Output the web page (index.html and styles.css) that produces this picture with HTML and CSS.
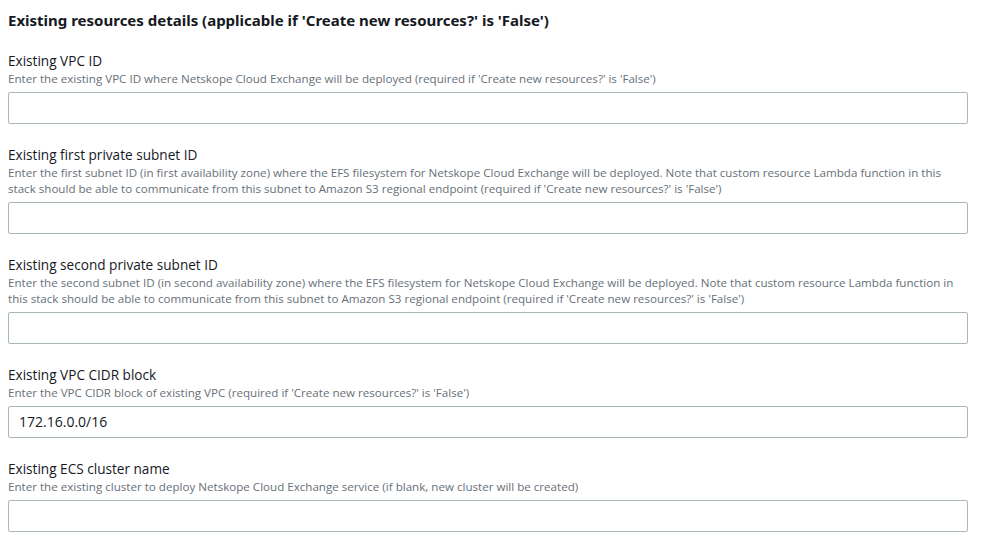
FILE: index.html
```html
<!DOCTYPE html>
<html>
<head>
<meta charset="utf-8">
<link rel="stylesheet" href="styles.css">
</head>
<body>
<div class="page">
  <h2 class="title">Existing resources details (applicable if 'Create new resources?' is 'False')</h2>
  <div class="fields">
    <div class="field">
      <div class="label">Existing VPC ID</div>
      <div class="desc">Enter the existing VPC ID where Netskope Cloud Exchange will be deployed (required if 'Create new resources?' is 'False')</div>
      <div class="input"></div>
    </div>
    <div class="field">
      <div class="label">Existing first private subnet ID</div>
      <div class="desc">Enter the first subnet ID (in first availability zone) where the EFS filesystem for Netskope Cloud Exchange will be deployed. Note that custom resource Lambda function in this stack should be able to communicate from this subnet to Amazon S3 regional endpoint (required if 'Create new resources?' is 'False')</div>
      <div class="input"></div>
    </div>
    <div class="field">
      <div class="label">Existing second private subnet ID</div>
      <div class="desc">Enter the second subnet ID (in second availability zone) where the EFS filesystem for Netskope Cloud Exchange will be deployed. Note that custom resource Lambda function in this stack should be able to communicate from this subnet to Amazon S3 regional endpoint (required if 'Create new resources?' is 'False')</div>
      <div class="input"></div>
    </div>
    <div class="field">
      <div class="label">Existing VPC CIDR block</div>
      <div class="desc">Enter the VPC CIDR block of existing VPC (required if 'Create new resources?' is 'False')</div>
      <div class="input">172.16.0.0/16</div>
    </div>
    <div class="field">
      <div class="label">Existing ECS cluster name</div>
      <div class="desc">Enter the existing cluster to deploy Netskope Cloud Exchange service (if blank, new cluster will be created)</div>
      <div class="input"></div>
    </div>
  </div>
</div>
</body>
</html>
```

FILE: styles.css
```css
html, body {
  margin: 0;
  padding: 0;
  background: #ffffff;
}
body {
  font-family: "Open Sans", "Noto Sans", sans-serif;
  color: #16191f;
}
.page {
  padding: 9px 13px 0 8px;
}
.title {
  margin: 0;
  font-family: "Noto Sans", "Open Sans", sans-serif;
  font-size: 15px;
  line-height: 22px;
  font-weight: 700;
  color: #16191f;
}
.fields {
  display: flex;
  flex-direction: column;
  gap: 21px;
  margin-top: 20px;
}
.field {
  display: flex;
  flex-direction: column;
}
.label {
  font-size: 13.6px;
  line-height: 20px;
  color: #16191f;
}
.desc {
  font-size: 11.6px;
  line-height: 16px;
  color: #687078;
}
.input {
  margin-top: 5px;
  height: 30px;
  border: 1px solid #aab7b8;
  border-radius: 2px;
  box-sizing: content-box;
  padding: 0 10px;
  font-size: 14px;
  line-height: 30px;
  color: #16191f;
}
```
